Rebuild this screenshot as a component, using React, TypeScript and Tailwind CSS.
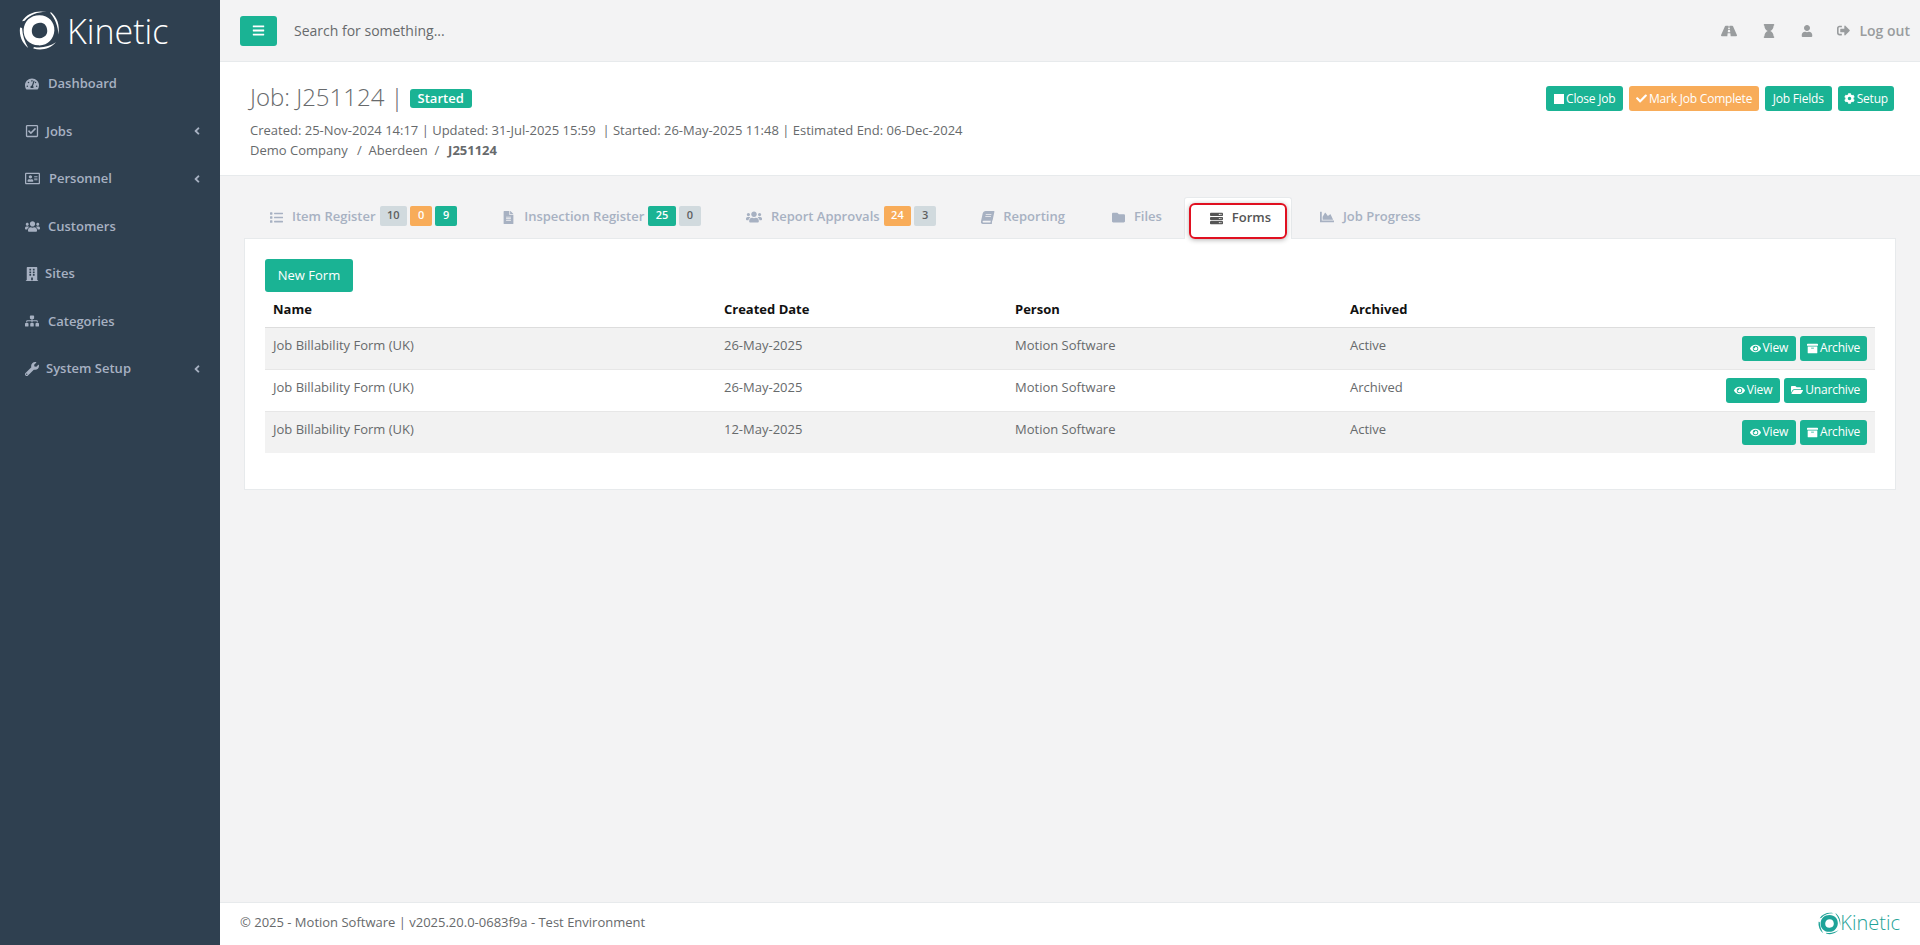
import type { ReactNode } from 'react';
import {
  FaAngleLeft,
  FaArchive,
  FaBars,
  FaBook,
  FaBuilding,
  FaChartArea,
  FaCheck,
  FaCog,
  FaEye,
  FaFileAlt,
  FaFolder,
  FaFolderOpen,
  FaList,
  FaRegAddressCard,
  FaRegCheckSquare,
  FaRoad,
  FaServer,
  FaSignOutAlt,
  FaSitemap,
  FaSquareFull,
  FaHourglass,
  FaTachometerAlt,
  FaUser,
  FaUsers,
  FaWrench,
} from 'react-icons/fa';

function Swirl({ className }: { className: string }) {
  return (
    <svg viewBox="0 0 40 40" className={className} fill="currentColor">
      <path
        fillRule="evenodd"
        d="M20 5C29 5 35 12 34.500 20C34 28 28 35 19 34.500C10 34 4 28 4.500 19C5 11 11 5 20 5ZM20.500 12.500C15.500 12.500 12.500 16 12.500 20.500C12.500 25 16 28 20.500 27.500C25 27 28 24 27.500 19.500C27 15 24.500 12.500 20.500 12.500Z"
      />
      <path d="M3 11C8 3 17 0 27 2C19 1.800 11 4 5.500 10.500Z" />
      <path d="M31 2C37 7 40 14 38.500 24C38 16 35.500 9 30.500 3Z" />
      <path d="M1 17C0 25 3 32 9 37C5.500 31 3.500 25 3 17.500Z" />
      <path d="M14 37.500C22 40 30 38 36 31.500C30 35.500 22 37.500 14.500 36Z" />
    </svg>
  );
}

const navItems = [
  { label: 'Dashboard', icon: <FaTachometerAlt />, cls: 'mr-[9px] text-[14px]' },
  { label: 'Jobs', icon: <FaRegCheckSquare />, cls: 'mr-[7px] text-[14px]', arrow: true },
  { label: 'Personnel', icon: <FaRegAddressCard />, cls: 'mr-[10px] text-[15px]', arrow: true },
  { label: 'Customers', icon: <FaUsers />, cls: 'mr-[9px] text-[15px]' },
  { label: 'Sites', icon: <FaBuilding />, cls: 'mr-[6px] text-[14px]' },
  { label: 'Categories', icon: <FaSitemap />, cls: 'mr-[9px] text-[14px]' },
  { label: 'System Setup', icon: <FaWrench />, cls: 'mr-[7px] text-[14px]', arrow: true },
];

function Badge({ color, children }: { color: 'gray' | 'orange' | 'green'; children: ReactNode }) {
  const cls =
    color === 'gray'
      ? 'bg-[#d1dade] text-[#5e5e5e]'
      : color === 'orange'
        ? 'bg-[#f8ac59] text-white'
        : 'bg-[#1ab394] text-white';
  return (
    <span className={`inline-flex h-[20px] min-w-[22px] items-center justify-center rounded-[2px] px-[7.500px] text-[11px] font-semibold ${cls}`}>
      {children}
    </span>
  );
}

function Tab({
  icon,
  label,
  width = 'w-[13px] text-[13px]',
  children,
}: {
  icon: ReactNode;
  label: string;
  width?: string;
  children?: ReactNode;
}) {
  return (
    <div className={`flex h-[41px] items-center pb-[1px] pl-5 text-[13px] font-semibold text-[#a7b1c2] ${children ? 'pr-[18px]' : 'pr-5'}`}>
      <span className={`mr-[9px] flex shrink-0 justify-center ${width}`}>{icon}</span>
      <span>{label}</span>
      {children && <span className="mb-[3px] ml-[4px] flex gap-[3px]">{children}</span>}
    </div>
  );
}

function Btn({
  color = 'bg-[#1ab394]',
  pad = 'px-[6px]',
  children,
}: {
  color?: string;
  pad?: string;
  children: ReactNode;
}) {
  return (
    <button className={`flex h-[25px] items-center gap-[2px] rounded-[3px] text-[12px] font-normal tracking-[-0.2px] text-white ${color} ${pad}`}>
      {children}
    </button>
  );
}

const rows = [
  { date: '26-May-2025', status: 'Active', archived: false },
  { date: '26-May-2025', status: 'Archived', archived: true },
  { date: '12-May-2025', status: 'Active', archived: false },
];

export default function App() {
  return (
    <div className="flex h-screen overflow-hidden bg-[#f3f3f4] font-['Open_Sans',sans-serif] text-[13px] text-[#676a6c]">
      <aside className="w-[220px] shrink-0 bg-[#2f4050]">
        <div className="flex h-[60px] items-center pl-[19px] pt-[1px] text-white">
          <Swirl className="h-[41px] w-[41px]" />
          <span className="ml-[7px] text-[34px] leading-none font-light">Kinetic</span>
        </div>
        <nav>
          {navItems.map((item) => (
            <div
              key={item.label}
              className="flex h-[47.500px] items-center pl-[25px] pr-[17px] text-[13px] font-semibold text-[#a7b1c2]"
            >
              <span className={`flex w-[14px] shrink-0 [&>svg]:shrink-0 ${item.cls}`}>{item.icon}</span>
              <span>{item.label}</span>
              {item.arrow && <FaAngleLeft className="ml-auto text-[12px]" />}
            </div>
          ))}
        </nav>
      </aside>

      <main className="flex min-w-0 flex-1 flex-col">
        <header className="flex h-[62px] shrink-0 items-center border-b border-[#e7eaec] pl-5 pr-[10px]">
          <button className="flex h-[30px] w-[37px] items-center justify-center rounded-[3px] bg-[#1ab394] text-[13px] text-white">
            <FaBars />
          </button>
          <span className="ml-[17px] text-[14px] text-[#676a6c]">Search for something...</span>
          <div className="ml-auto flex items-center text-[14px] text-[#999c9e]">
            <FaRoad className="text-[16px]" />
            <FaHourglass className="ml-[25px] text-[14px]" />
            <FaUser className="ml-[25px] text-[12px]" />
            <FaSignOutAlt className="ml-[24px] text-[13px]" />
            <span className="ml-[9px] font-semibold">Log out</span>
          </div>
        </header>

        <section className="flex h-[114px] shrink-0 items-start justify-between border-b border-[#e7eaec] bg-white pl-[30px] pr-[26px]">
          <div>
            <div className="mt-[18px] flex h-[34px] items-center">
              <h1 className="text-[24px] font-light text-[#676a6c]">Job: J251124 |</h1>
              <span className="ml-[6px] mt-[3px] rounded-[3px] bg-[#1ab394] px-[8px] py-[1px] text-[13px] font-semibold leading-[17px] text-white">
                Started
              </span>
            </div>
            <p className="mt-[6px] leading-[20px]">
              Created: 25-Nov-2024 14:17 | Updated: 31-Jul-2025 15:59 &nbsp;| Started: 26-May-2025 11:48 | Estimated End: 06-Dec-2024
            </p>
            <p className="leading-[20px]">
              Demo Company &nbsp;<span className="ml-[2.500px]">/</span>&nbsp; Aberdeen &nbsp;/&nbsp;{' '}
              <strong className="ml-[2px] font-bold">J251124</strong>
            </p>
          </div>
          <div className="mt-[24px] flex gap-[6px]">
            <Btn pad="px-[8px]">
              <FaSquareFull className="text-[10px]" />
              Close Job
            </Btn>
            <Btn color="bg-[#f8ac59]" pad="px-[6.500px]">
              <FaCheck className="text-[11px]" />
              Mark Job Complete
            </Btn>
            <Btn pad="px-[8px]">Job Fields</Btn>
            <Btn>
              <FaCog className="text-[11px]" />
              Setup
            </Btn>
          </div>
        </section>

        <div className="mx-[25px] mt-[21px] flex h-[41px] shrink-0 gap-[7px] pl-[5px]">
          <Tab icon={<FaList />} label="Item Register">
            <Badge color="gray">10</Badge>
            <Badge color="orange">0</Badge>
            <Badge color="green">9</Badge>
          </Tab>
          <Tab icon={<FaFileAlt />} label="Inspection Register">
            <Badge color="green">25</Badge>
            <Badge color="gray">0</Badge>
          </Tab>
          <Tab icon={<FaUsers />} width="w-[16px] text-[16px]" label="Report Approvals">
            <Badge color="orange">24</Badge>
            <Badge color="gray">3</Badge>
          </Tab>
          <Tab icon={<FaBook className="-skew-x-12" />} label="Reporting" />
          <Tab icon={<FaFolder />} label="Files" />
          <div className="relative z-10 mb-[-1px] ml-[-5px] mr-[1px] flex h-[42px] w-[108px] items-center justify-center gap-[9px] rounded-t-[3px] border border-b-0 border-[#e7eaec] bg-white pb-[1px] pl-[5px] text-[13px] font-semibold text-[#555555]">
            <FaServer className="shrink-0 text-[13px] text-[#555555]" />
            <span>Forms</span>
            <div className="absolute left-[4px] top-[5px] h-[36px] w-[98px] rounded-[6px] border-2 border-[#e01020] shadow-[0_1px_5px_rgba(0,0,0,0.3)]" />
          </div>
          <Tab icon={<FaChartArea />} width="w-[14px] text-[14px]" label="Job Progress" />
        </div>

        <section className="mx-[24px] h-[252px] shrink-0 border border-[#e7eaec] bg-white px-[20px] pt-[20px]">
          <button className="h-[33px] w-[88px] rounded-[3px] bg-[#1ab394] text-[13px] text-white">New Form</button>
          <table className="w-[1610px] table-fixed border-collapse">
            <thead>
              <tr className="border-b border-[#dddddd] text-left text-[13px] font-bold text-[#111111]">
                <th className="h-[35px] w-[451px] px-2">Name</th>
                <th className="w-[291px] px-2">Created Date</th>
                <th className="w-[335px] px-2">Person</th>
                <th className="w-[200px] px-2">Archived</th>
                <th />
              </tr>
            </thead>
            <tbody>
              {rows.map((row, i) => (
                <tr key={i} className={`border-t border-[#e7e7e7] align-top ${i % 2 === 0 ? 'bg-[#f2f2f2]' : 'bg-white'}`}>
                  <td className="px-2 pb-[14px] pt-[7px] leading-[20px]">Job Billability Form (UK)</td>
                  <td className="px-2 pt-[7px] leading-[20px]">{row.date}</td>
                  <td className="px-2 pt-[7px] leading-[20px]">Motion Software</td>
                  <td className="px-2 pt-[7px] leading-[20px]">{row.status}</td>
                  <td className="px-2 pt-[8px]">
                    <div className="flex justify-end gap-[4px]">
                      <Btn pad="px-[8px]">
                        <FaEye className="text-[11px]" />
                        View
                      </Btn>
                      <Btn pad="px-[7px]">
                        {row.archived ? <FaFolderOpen className="text-[12px]" /> : <FaArchive className="text-[11px]" />}
                        {row.archived ? 'Unarchive' : 'Archive'}
                      </Btn>
                    </div>
                  </td>
                </tr>
              ))}
            </tbody>
          </table>
        </section>

        <footer className="mt-auto flex h-[43px] shrink-0 items-center justify-between border-t border-[#e7eaec] bg-white pb-[2px] pl-5 pr-[20px]">
          <span>© 2025 - Motion Software | v2025.20.0-0683f9a - Test Environment</span>
          <div className="flex items-center text-[#1fa398]">
            <Swirl className="h-[23px] w-[23px]" />
            <span className="ml-[-1px] text-[20px] leading-none font-light">Kinetic</span>
          </div>
        </footer>
      </main>
    </div>
  );
}
